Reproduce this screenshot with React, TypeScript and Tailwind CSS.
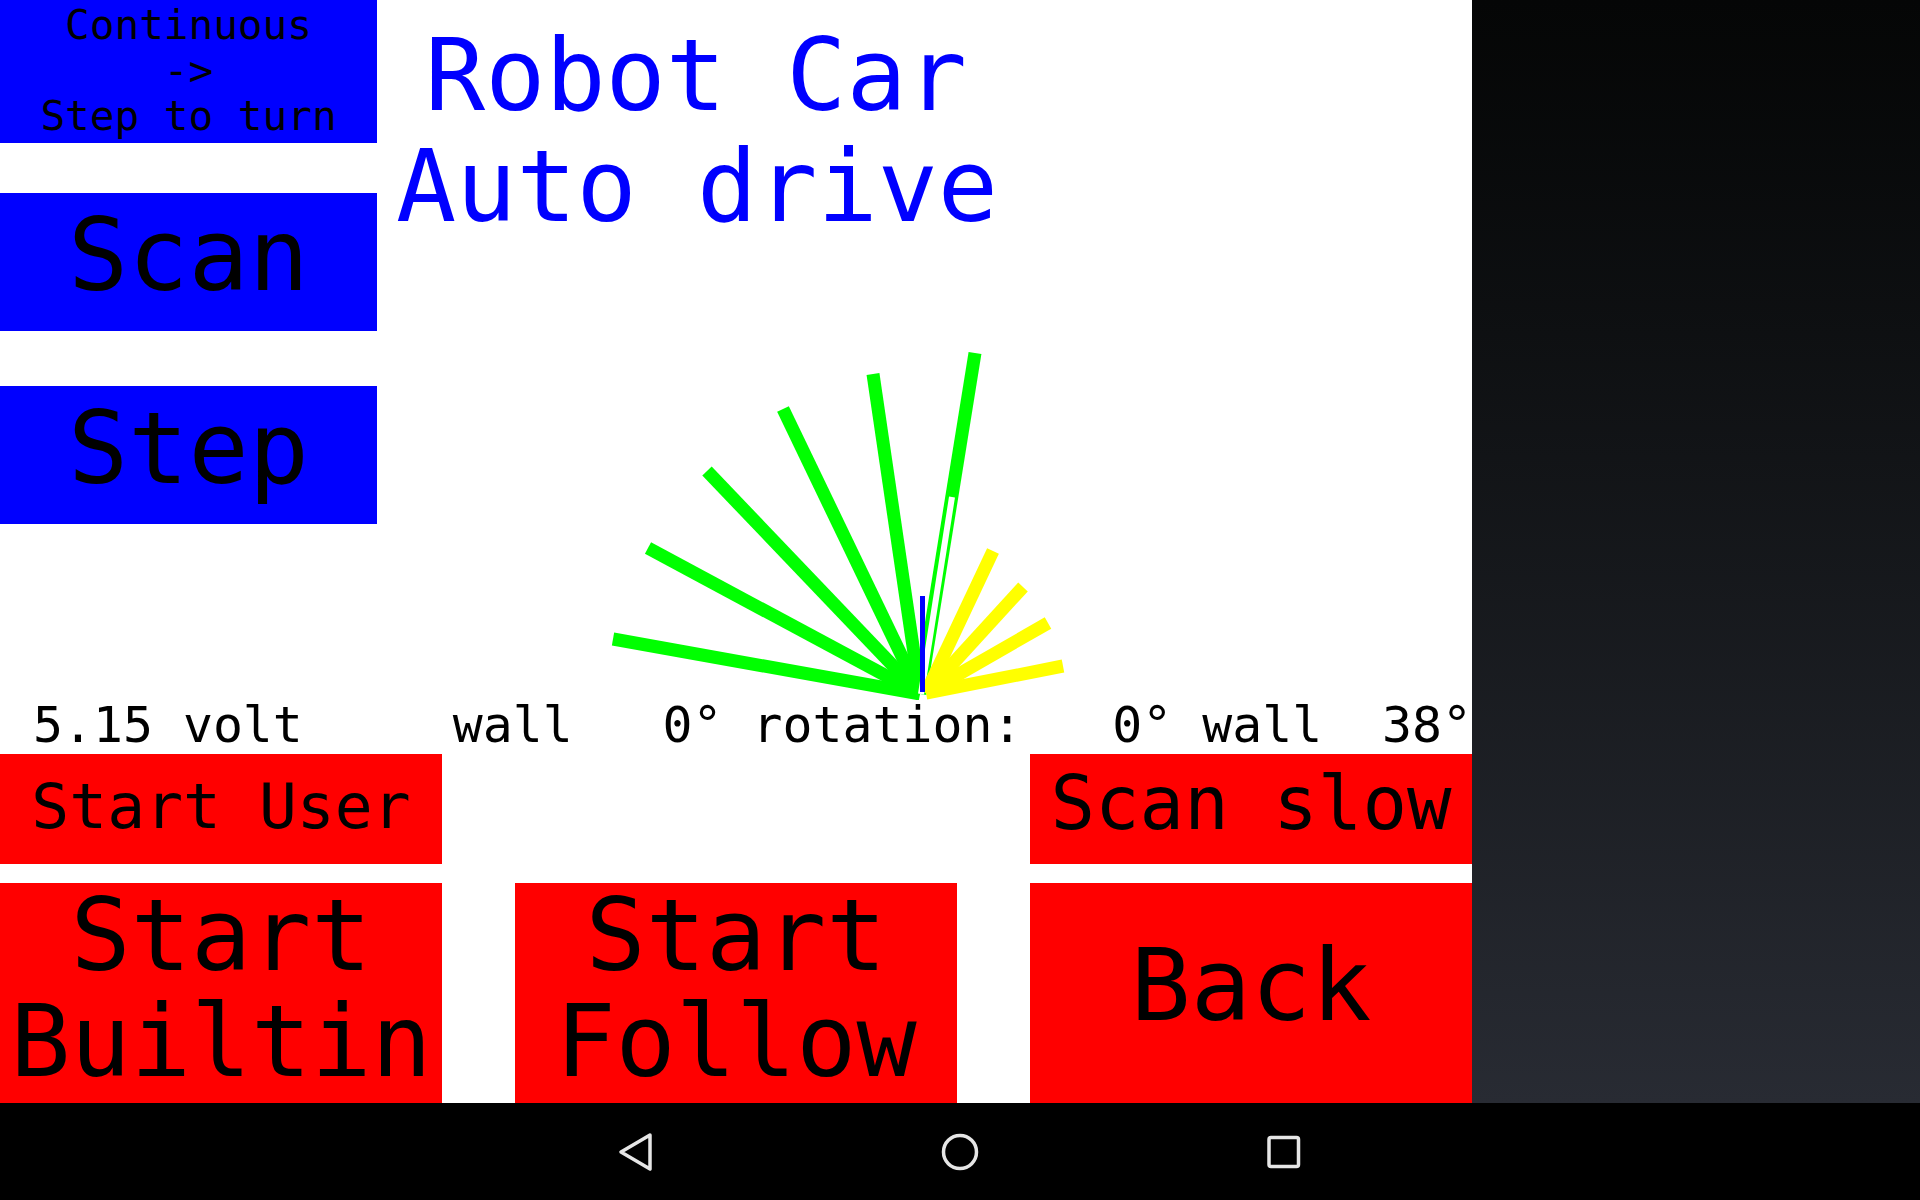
import React from "react";
import clsx from "clsx";

// scan rays, page coordinates, drawn from the sensor origin
const GREEN_RAYS: [number, number][] = [
  [613, 639],
  [648, 548],
  [707, 471],
  [783, 409],
  [873, 374],
  [975, 353],
];
const YELLOW_RAYS: [number, number][] = [
  [993, 551],
  [1023, 587],
  [1048, 623],
  [1063, 666],
];

function ScanFan() {
  return (
    <svg viewBox="377 242 1095 458" width={1095} height={458} className="block">
      {GREEN_RAYS.map(([x, y], i) => (
        <line key={i} x1={920} y1={694} x2={x} y2={y} stroke="#00ff00" strokeWidth={13} />
      ))}
      <line x1={921} y1={694} x2={952} y2={497} stroke="#ffffff" strokeWidth={6} />
      {YELLOW_RAYS.map(([x, y], i) => (
        <line key={i} x1={926} y1={693} x2={x} y2={y} stroke="#ffff00" strokeWidth={13} />
      ))}
      <line x1={922.5} y1={596} x2={922.5} y2={692} stroke="#0000ff" strokeWidth={5} />
    </svg>
  );
}

function Btn({ className, children }: { className?: string; children: React.ReactNode }) {
  return (
    <div className={clsx("flex items-center justify-center text-center text-black whitespace-pre", className)}>
      <div>{children}</div>
    </div>
  );
}

function NavBar() {
  return (
    <div className="h-[97px] bg-black flex items-center justify-center gap-[284px]">
      <svg width={40} height={40} viewBox="0 0 40 40">
        <polygon
          points="34,3 5,20 34,37"
          fill="none"
          stroke="#e6e6e6"
          strokeWidth={3.5}
          strokeLinejoin="round"
        />
      </svg>
      <svg width={40} height={40} viewBox="0 0 40 40">
        <circle cx={20} cy={20} r={16.5} fill="none" stroke="#e6e6e6" strokeWidth={3.5} />
      </svg>
      <svg width={40} height={40} viewBox="0 0 40 40">
        <rect x={5} y={5.5} width={29.5} height={29} rx={2} fill="none" stroke="#e6e6e6" strokeWidth={3.5} />
      </svg>
    </div>
  );
}

export default function App() {
  return (
    <div className="w-[1920px] h-[1200px] flex flex-col overflow-hidden font-['DejaVu_Sans_Mono',monospace]">
      <div className="flex flex-1">
        <div className="w-[1472px] h-[1103px] bg-white flex flex-col">
          <div className="h-[700px] grid grid-cols-[377px_1fr]">
            <div className="flex flex-col">
              <Btn className="h-[143px] bg-[#0000ff] text-[41px] leading-[45.5px]">
                {"Continuous\n->\nStep to turn"}
              </Btn>
              <Btn className="mt-[50px] h-[138px] bg-[#0000ff] text-[100px] leading-[100px] pb-[13px]">Scan</Btn>
              <Btn className="mt-[55px] h-[138px] bg-[#0000ff] text-[100px] leading-[100px] pb-[13px]">Step</Btn>
            </div>
            <div className="flex flex-col">
              <div className="pt-[20px] text-[100px] leading-[111px] text-[#0000ff] whitespace-pre">
                <div className="ml-[48px]">Robot Car</div>
                <div className="ml-[19px]">Auto drive</div>
              </div>
              <ScanFan />
            </div>
          </div>

          <div className="h-[50px] pl-[33px] text-[49.8px] leading-[50px] text-black whitespace-pre">
            {"5.15 volt     wall   0° rotation:   0° wall  38°"}
          </div>

          <div className="mt-[4px] flex justify-between">
            <Btn className="w-[442px] h-[110px] bg-[#ff0000] text-[63px] leading-[63px] pb-[6px]">Start User</Btn>
            <Btn className="w-[442px] h-[110px] bg-[#ff0000] text-[74px] leading-[74px] pb-[13px]">Scan slow</Btn>
          </div>

          <div className="mt-[19px] flex justify-between">
            <Btn className="w-[442px] h-[220px] bg-[#ff0000] text-[100px] leading-[106px] pb-[9px]">
              {"Start\nBuiltin"}
            </Btn>
            <Btn className="w-[442px] h-[220px] bg-[#ff0000] text-[100px] leading-[106px] pb-[9px]">
              {"Start\nFollow"}
            </Btn>
            <Btn className="w-[442px] h-[220px] bg-[#ff0000] text-[100px] leading-[100px] pb-[15px]">Back</Btn>
          </div>
        </div>
        <div className="flex-1 bg-gradient-to-b from-[#050606] to-[#282b33]" />
      </div>
      <NavBar />
    </div>
  );
}
